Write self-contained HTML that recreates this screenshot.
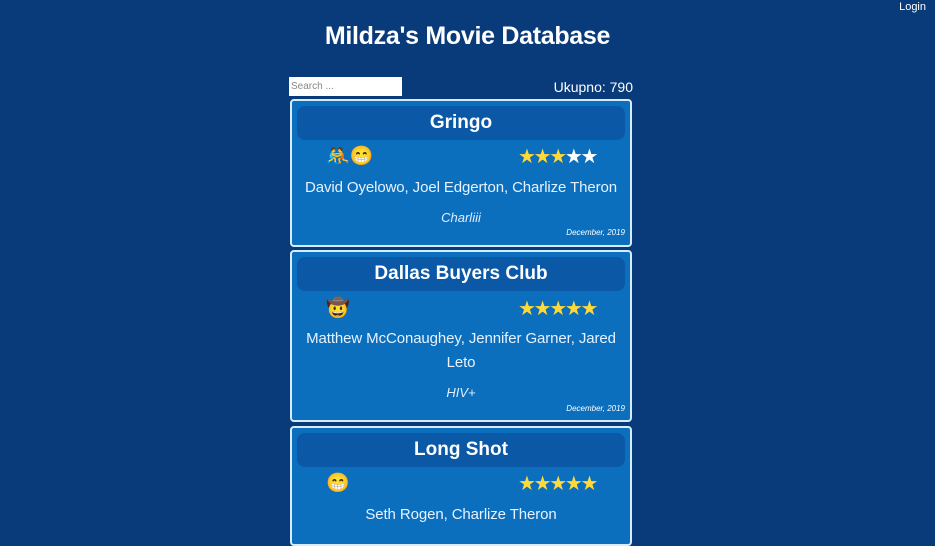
<!DOCTYPE html>
<html><head><meta charset="utf-8"><style>
body{margin:0;width:935px;height:525px;overflow:hidden;background:#093b7a;font-family:"Liberation Sans",sans-serif;color:#fff;position:relative}
.login{position:absolute;right:9px;top:1px;font-size:11px}
h1{position:absolute;top:22px;left:0;width:935px;text-align:center;margin:0;font-size:25px;font-weight:bold;letter-spacing:-0.3px}
.search{position:absolute;left:289px;top:77px;width:113px;height:19px;background:#fff;color:#888;font-size:10px;line-height:19px;padding-left:2px;box-sizing:border-box}
.total{position:absolute;right:302px;top:79px;font-size:14px}
.card{position:absolute;left:290px;width:342px;background:#0b6fbd;border:2px solid #d8ecff;border-radius:4px;box-sizing:border-box}
.card>*{position:absolute;left:0;right:0}
.tb{left:5px!important;right:5px!important;top:5px;height:34px;background:#0a58a6;border-radius:8px;text-align:center;font-size:19px;font-weight:bold;line-height:34px}
.emo{left:34px!important;font-size:19px;line-height:22px}
.stars{left:226px!important;font-size:20px;line-height:22px;letter-spacing:-2.3px;color:#ffd83a}
.stars i{font-style:normal;color:#fff}
.act{text-align:center;font-size:15px;line-height:24px;padding:0 6px;color:#e6f2ff;letter-spacing:-0.1px}
.com{text-align:center;font-style:italic;font-size:13px;line-height:16px;color:#e0eeff}
.date{text-align:right;font-style:italic;font-size:8px;line-height:10px;padding-right:5px}
</style></head><body>
<div class="login">Login</div>
<h1>Mildza's Movie Database</h1>
<div class="search">Search ...</div>
<div class="total">Ukupno: 790</div>
<div class="card" style="top:99px;height:148px">
<div class="tb">Gringo</div>
<span class="emo" style="top:45px">🤼😁</span><span class="stars" style="top:45px">★★★<i>★★</i></span>
<div class="act" style="top:75px">David Oyelowo, Joel Edgerton, Charlize Theron</div>
<div class="com" style="top:109px">Charliii</div>
<div class="date" style="top:127px">December, 2019</div>
</div>
<div class="card" style="top:250px;height:172px">
<div class="tb">Dallas Buyers Club</div>
<span class="emo" style="top:46px">🤠</span><span class="stars" style="top:46px">★★★★★</span>
<div class="act" style="top:75px">Matthew McConaughey, Jennifer Garner, Jared Leto</div>
<div class="com" style="top:133px">HIV+</div>
<div class="date" style="top:152px">December, 2019</div>
</div>
<div class="card" style="top:426px;height:120px">
<div class="tb">Long Shot</div>
<span class="emo" style="top:45px">😁</span><span class="stars" style="top:45px">★★★★★</span>
<div class="act" style="top:75px">Seth Rogen, Charlize Theron</div>
</div>
</body></html>
